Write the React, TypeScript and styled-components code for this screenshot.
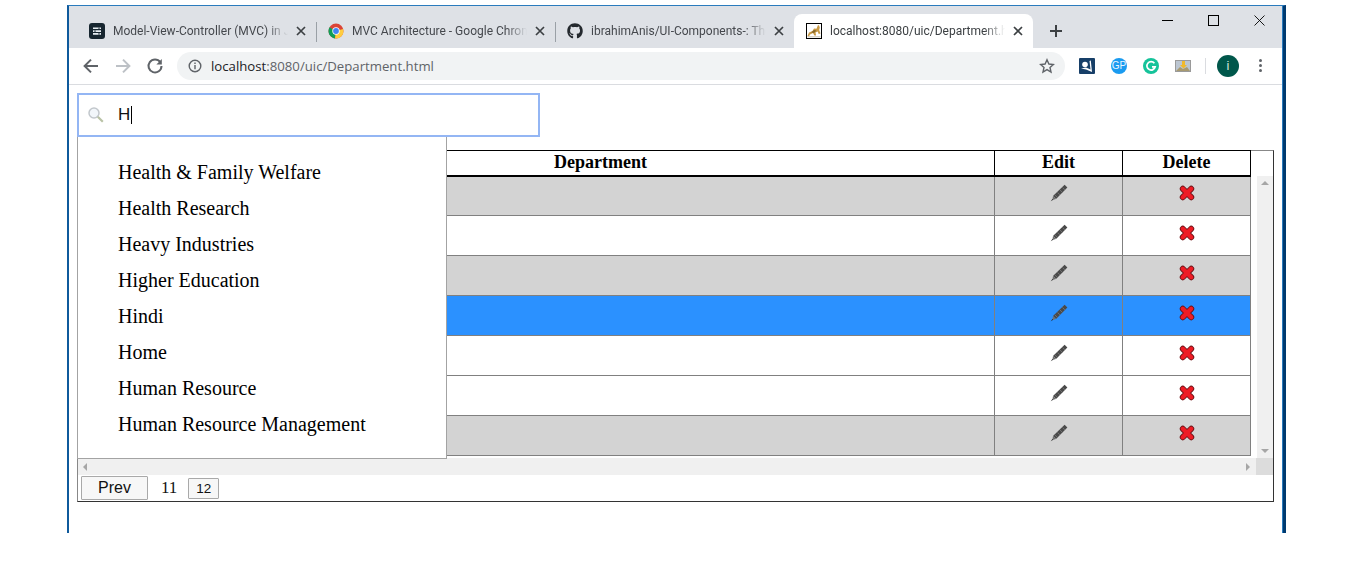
import styled, { createGlobalStyle } from 'styled-components';
import { FaGithub } from 'react-icons/fa';

const GlobalStyle = createGlobalStyle`
  html, body {
    margin: 0;
    padding: 0;
    background: #fff;
  }
  * {
    box-sizing: border-box;
  }
`;

const Page = styled.div`
  width: 1360px;
  height: 570px;
  padding: 5px 0 0 67px;
  overflow: hidden;
`;

const Window = styled.div`
  width: 1219px;
  height: 528px;
  position: relative;
  border-top: 1px solid #2a7bbd;
  border-left: 2px solid #0f5a9c;
  border-right: 3px solid #003a70;
  display: flex;
  flex-direction: column;
  background: #fff;

  &::after {
    content: '';
    position: absolute;
    top: 0;
    bottom: 0;
    right: 0;
    width: 1px;
    background: #2a7bbd;
  }
`;

const TitleBar = styled.div`
  height: 42px;
  flex: none;
  background: #dee1e6;
  display: flex;
  padding: 8px 0 0 8px;
  position: relative;
`;

const Tab = styled.div<{ $active?: boolean }>`
  width: 239px;
  height: 34px;
  flex: none;
  display: flex;
  align-items: center;
  padding-left: 12px;
  position: relative;
  background: ${(p) => (p.$active ? '#fff' : 'transparent')};
  border-radius: 8px 8px 0 0;
  font-family: Roboto, 'Open Sans', sans-serif;
  font-size: 12px;
  color: ${(p) => (p.$active ? '#3c4043' : '#45484d')};
`;

const TabSeparator = styled.span`
  position: absolute;
  right: -1px;
  top: 8px;
  width: 1px;
  height: 20px;
  background: #9aa0a6;
`;

const Favicon = styled.span`
  width: 16px;
  height: 16px;
  flex: none;
  display: flex;
  margin-right: 8px;
`;

const TabTitle = styled.span`
  width: 175px;
  flex: none;
  overflow: hidden;
  white-space: nowrap;
  -webkit-mask-image: linear-gradient(to right, #000 88%, transparent 100%);
  mask-image: linear-gradient(to right, #000 88%, transparent 100%);
`;

const TabClose = styled.span`
  display: flex;
  margin-left: 8px;
`;

const NewTab = styled.span`
  display: flex;
  align-items: center;
  margin-left: 16px;
  height: 34px;
`;

const WindowControls = styled.div`
  display: flex;
  position: absolute;
  right: 18px;
  top: 9px;
  gap: 35px;
`;

const Toolbar = styled.div`
  height: 37px;
  flex: none;
  border-bottom: 1px solid #dadce0;
  display: flex;
  align-items: center;
  padding: 0 15px 1px 13px;
`;

const NavButton = styled.span`
  width: 18px;
  height: 18px;
  display: flex;
  margin-right: 14px;
`;

const AddressBar = styled.div`
  width: 888px;
  height: 28px;
  margin-left: -1px;
  border-radius: 14px;
  background: #f1f3f4;
  display: flex;
  align-items: center;
  padding: 0 10px 0 11px;
  font-family: 'Open Sans', 'Noto Sans', sans-serif;
  font-size: 13.2px;
  color: #5f6368;
`;

const AddressHost = styled.span`
  color: #202124;
`;

const AddressText = styled.span`
  margin-left: 9px;
  flex: 1;
`;

const Extensions = styled.div`
  display: flex;
  align-items: center;
  margin-left: 14px;
  gap: 16px;
`;

const ExtSlot = styled.span`
  width: 16px;
  height: 16px;
  display: flex;
`;

const GpBadge = styled.span`
  width: 16px;
  height: 16px;
  border-radius: 50%;
  background: #1a9bf0;
  color: #e8f5ff;
  font-family: 'Liberation Sans', sans-serif;
  font-size: 10px;
  line-height: 16px;
  text-align: center;
`;

const ToolbarDivider = styled.span`
  width: 1px;
  height: 16px;
  background: #dadce0;
  margin-left: 14px;
`;

const Avatar = styled.span`
  width: 22px;
  height: 22px;
  margin-left: 11px;
  border-radius: 50%;
  background: #00574b;
  color: #cfe3de;
  font-family: 'Liberation Sans', sans-serif;
  font-size: 13px;
  line-height: 22px;
  text-align: center;
`;

const MenuDots = styled.span`
  display: flex;
  flex-direction: column;
  gap: 2px;
  margin-left: 20px;

  i {
    width: 3px;
    height: 3px;
    border-radius: 50%;
    background: #5f6368;
  }
`;

const Content = styled.div`
  flex: 1;
  position: relative;
  padding: 8px 0 0 8px;
`;

const SearchBox = styled.div`
  width: 463px;
  height: 44px;
  border: 2px solid #94b6f4;
  display: flex;
  align-items: center;
  padding: 0 0 0 8px;
  background: #fff;
  font-family: 'Liberation Sans', sans-serif;
  font-size: 17px;
  color: #111;
`;

const SearchIcon = styled.span`
  width: 18px;
  height: 18px;
  display: flex;
  margin-right: 13px;
`;

const Caret = styled.span`
  width: 1px;
  height: 18px;
  background: #000;
  margin-left: 1px;
`;

const Suggestions = styled.ul`
  position: absolute;
  left: 8px;
  top: 52px;
  width: 370px;
  height: 322px;
  margin: 0;
  padding: 17px 0 15px 40px;
  list-style: none;
  background: #fff;
  border: 1px solid #a3a3a3;
  border-top: none;
  z-index: 2;
`;

const Suggestion = styled.li`
  height: 36px;
  line-height: 36px;
  font-family: 'Liberation Serif', serif;
  font-size: 20px;
  color: #000;
  white-space: nowrap;
`;

const Panel = styled.div`
  width: 1197px;
  height: 352px;
  margin-top: 13px;
  border: 1px solid #333;
  border-top-color: #888;
  border-left-color: #888;
  display: flex;
  flex-direction: column;
`;

const ScrollRow = styled.div`
  height: 307px;
  display: flex;
`;

const Table = styled.table`
  width: 1173px;
  height: 305px;
  margin: -1px 0 0 -1px;
  flex: none;
  table-layout: fixed;
  border-collapse: collapse;
  font-family: 'Liberation Serif', serif;
`;

const HeadCell = styled.th`
  height: 25px;
  padding: 0;
  font-size: 18px;
  font-weight: 700;
  color: #000;
  border: 1px solid #000;
  border-bottom-width: 2px;
  text-align: center;
`;

const Row = styled.tr<{ $tone: 'gray' | 'white' | 'blue' }>`
  height: 40px;
  background: ${(p) =>
    p.$tone === 'gray' ? '#d3d3d3' : p.$tone === 'blue' ? '#2b91ff' : '#fff'};
`;

const Cell = styled.td`
  padding: 0 0 5px;
  border: 1px solid #808080;
  text-align: center;
  line-height: 0;
`;

const VScrollbar = styled.div`
  width: 17px;
  height: 282px;
  margin: 25px 0 0 6px;
  background: #f0f0f0;
  display: flex;
  flex-direction: column;
  justify-content: space-between;
  align-items: center;
  padding: 5px 0;
`;

const HScrollbar = styled.div`
  height: 17px;
  flex: none;
  display: flex;
  background: #f0f0f0;
`;

const HTrack = styled.div`
  flex: 1;
  display: flex;
  align-items: center;
  justify-content: space-between;
  padding: 0 6px 0 5px;
`;

const ScrollCorner = styled.div`
  width: 17px;
  background: #dcdcdc;
`;

const Arrow = styled.span<{ $dir: 'up' | 'down' | 'left' | 'right' }>`
  width: 0;
  height: 0;
  border: 4px solid transparent;
  ${(p) => (p.$dir === 'up' ? 'border-top-width: 0; border-bottom: 4px solid #a6a6a6;' : '')}
  ${(p) => (p.$dir === 'down' ? 'border-bottom-width: 0; border-top: 4px solid #a6a6a6;' : '')}
  ${(p) => (p.$dir === 'left' ? 'border-left-width: 0; border-right: 4px solid #a6a6a6;' : '')}
  ${(p) => (p.$dir === 'right' ? 'border-right-width: 0; border-left: 4px solid #a6a6a6;' : '')}
`;

const Pager = styled.div`
  flex: 1;
  display: flex;
  align-items: center;
  padding-left: 3px;
`;

const PageButton = styled.button<{ $wide?: boolean }>`
  width: ${(p) => (p.$wide ? '67px' : '31px')};
  height: ${(p) => (p.$wide ? '24px' : '21px')};
  padding: 0;
  border: 1px solid #a9a9a9;
  border-radius: 1px;
  background: #f7f7f7;
  color: #111;
  font-family: 'Liberation Sans', sans-serif;
  font-size: ${(p) => (p.$wide ? '16px' : '13.5px')};
`;

const CurrentPage = styled.span`
  margin: 0 11px 0 13px;
  font-family: 'Liberation Serif', serif;
  font-size: 17px;
  color: #111;
`;

const PencilIcon = () => (
  <svg width="18" height="18" viewBox="0 0 18 18">
    <path d="M14.600 .8l2.800 2.800L6 15 3 12z" fill="#4a4a4a" />
    <path d="M5 11l2.400 2.400M7.500 8.500l2.400 2.400M10 6l2.400 2.400M12.500 3.500l2.400 2.400" stroke="#808080" strokeWidth="0.7" />
    <path d="M3 12l3 3-3.600 1z" fill="#6e6e6e" />
    <path d="M.8 17.200l1.600-2.200.8.8z" fill="#222" />
  </svg>
);

const CrossIcon = () => (
  <svg width="16" height="16" viewBox="0 0 16 16">
    <path d="M3.800 3.800l8.400 8.400M12.200 3.800l-8.400 8.400" stroke="#6b1216" strokeWidth="6" strokeLinecap="round" />
    <path d="M3.800 3.800l8.400 8.400M12.200 3.800l-8.400 8.400" stroke="#ee1c25" strokeWidth="4.400" strokeLinecap="round" />
  </svg>
);

const CloseGlyph = () => (
  <svg width="10" height="10" viewBox="0 0 10 10">
    <path d="M1 1l8 8M9 1L1 9" stroke="#3c4043" strokeWidth="1.7" />
  </svg>
);

const ChromeLogo = () => (
  <svg width="16" height="16" viewBox="0 0 16 16">
    <circle cx="8" cy="8" r="7.500" fill="#db4437" />
    <path d="M8 8L1.500 4.200A7.500 7.500 0 0 0 7 15.400z" fill="#0f9d58" />
    <path d="M8 8l7.200-2A7.500 7.500 0 0 1 7 15.400z" fill="#ffcd40" />
    <circle cx="8" cy="8" r="3.700" fill="#fff" />
    <circle cx="8" cy="8" r="2.900" fill="#4285f4" />
  </svg>
);

const DocsLogo = () => (
  <svg width="16" height="16" viewBox="0 0 16 16">
    <rect width="16" height="16" rx="3" fill="#172630" />
    <path d="M4 4.500h8v1.600H4zM4 7.300h8v1.600H4zM4 10.100h8v1.600H4z" fill="#e8eef2" />
    <path d="M9.500 4.500h1v1.600h-1zM5.500 7.300h1v1.600h-1zM9.500 10.100h1v1.600h-1z" fill="#172630" />
  </svg>
);

const TomcatLogo = () => (
  <svg width="16" height="16" viewBox="0 0 16 16">
    <rect x="0.500" y="0.500" width="15" height="15" fill="#fff" stroke="#000" />
    <path d="M1.500 13l1.500-3.500 3.500-1.500 1.500-2.500 2.500.3L12 2l1 .5.800 2-.6 2.500 1.300 3.500-1.800.5-1-2.500-2.200 1 .6 3H8.400L7 10 4 11.500 3 13.500z" fill="#c99a45" />
    <path d="M5 9.500l3-2.500 2.500.5-2.500 2.500z" fill="#8a6a2c" />
    <path d="M1.500 13.800h13" stroke="#c5bfb0" />
  </svg>
);

const ArrowIcon = ({ color, flip }: { color: string; flip?: boolean }) => (
  <svg width="18" height="18" viewBox="0 0 18 18" style={flip ? { transform: 'scaleX(-1)' } : undefined}>
    <path d="M16 9H3M9 2.600L2.600 9 9 15.400" fill="none" stroke={color} strokeWidth="2" />
  </svg>
);

const departments = [
  'Health & Family Welfare',
  'Health Research',
  'Heavy Industries',
  'Higher Education',
  'Hindi',
  'Home',
  'Human Resource',
  'Human Resource Management',
];

const rows: Array<'gray' | 'white' | 'blue'> = ['gray', 'white', 'gray', 'blue', 'white', 'white', 'gray'];

export default function App() {
  return (
    <>
      <GlobalStyle />
      <Page>
        <Window>
          <TitleBar>
            <Tab>
              <Favicon>
                <DocsLogo />
              </Favicon>
              <TabTitle>Model-View-Controller (MVC) in Java</TabTitle>
              <TabClose>
                <CloseGlyph />
              </TabClose>
              <TabSeparator />
            </Tab>
            <Tab>
              <Favicon>
                <ChromeLogo />
              </Favicon>
              <TabTitle>MVC Architecture - Google Chrome</TabTitle>
              <TabClose>
                <CloseGlyph />
              </TabClose>
              <TabSeparator />
            </Tab>
            <Tab>
              <Favicon>
                <FaGithub size={16} color="#24292e" />
              </Favicon>
              <TabTitle>ibrahimAnis/UI-Components-: The</TabTitle>
              <TabClose>
                <CloseGlyph />
              </TabClose>
            </Tab>
            <Tab $active>
              <Favicon>
                <TomcatLogo />
              </Favicon>
              <TabTitle>localhost:8080/uic/Department.html</TabTitle>
              <TabClose>
                <CloseGlyph />
              </TabClose>
            </Tab>
            <NewTab>
              <svg width="14" height="14" viewBox="0 0 14 14">
                <path d="M7 1v12M1 7h12" stroke="#3c4043" strokeWidth="2" />
              </svg>
            </NewTab>
            <WindowControls>
              <svg width="11" height="11" viewBox="0 0 11 11">
                <path d="M0 5.500h11" stroke="#000" />
              </svg>
              <svg width="11" height="11" viewBox="0 0 11 11">
                <rect x="0.500" y="0.500" width="10" height="10" fill="none" stroke="#000" />
              </svg>
              <svg width="11" height="11" viewBox="0 0 11 11">
                <path d="M.5.5l10 10M10.500.5l-10 10" stroke="#000" strokeWidth="0.9" />
              </svg>
            </WindowControls>
          </TitleBar>
          <Toolbar>
            <NavButton>
              <ArrowIcon color="#5f6368" />
            </NavButton>
            <NavButton>
              <ArrowIcon color="#bdc1c6" flip />
            </NavButton>
            <NavButton>
              <svg width="18" height="18" viewBox="0 0 18 18">
                <path d="M14.300 5.200A6.500 6.500 0 1 0 15.500 9" fill="none" stroke="#5f6368" strokeWidth="2" />
                <path d="M15.800 2v5.400h-5.400z" fill="#5f6368" />
              </svg>
            </NavButton>
            <AddressBar>
              <svg width="14" height="14" viewBox="0 0 14 14">
                <circle cx="7" cy="7" r="5.800" fill="none" stroke="#5f6368" strokeWidth="1.400" />
                <path d="M7 6v4.200M7 3.600v1.400" stroke="#5f6368" strokeWidth="1.400" />
              </svg>
              <AddressText>
                <AddressHost>localhost</AddressHost>:8080/uic/Department.html
              </AddressText>
              <svg width="16" height="16" viewBox="0 0 16 16">
                <path
                  d="M8 1.800l1.900 4.200 4.500.5-3.400 3 1 4.500L8 11.600 4 14l1-4.500-3.400-3 4.500-.5z"
                  fill="none"
                  stroke="#5f6368"
                  strokeWidth="1.400"
                />
              </svg>
            </AddressBar>
            <Extensions>
              <ExtSlot>
                <svg width="16" height="16" viewBox="0 0 16 16">
                  <rect width="16" height="16" rx="1" fill="#173f68" />
                  <path d="M2 10.500l5 1 6 2.500-1.200-11.500-1.300.5 1 8.500-4.500-2z" fill="#fff" />
                  <circle cx="6" cy="6.500" r="2.800" fill="#fff" />
                </svg>
              </ExtSlot>
              <GpBadge>GP</GpBadge>
              <ExtSlot>
                <svg width="16" height="16" viewBox="0 0 16 16">
                  <circle cx="8" cy="8" r="8" fill="#15c39a" />
                  <path d="M11.400 5.200A4.200 4.200 0 1 0 12.200 8.800H9" fill="none" stroke="#fff" strokeWidth="1.700" />
                </svg>
              </ExtSlot>
              <ExtSlot>
                <svg width="16" height="16" viewBox="0 0 16 16">
                  <rect y="2" width="16" height="12" fill="#bcc6d2" />
                  <rect x="0.500" y="2.500" width="15" height="11" fill="none" stroke="#9a9a9a" />
                  <path d="M1 13l4-4 3 2 4-2 3 4z" fill="#a89a70" />
                  <path d="M7 3h3v4h2l-3.500 3.500L5 7h2z" fill="#f0b92c" />
                </svg>
              </ExtSlot>
            </Extensions>
            <ToolbarDivider />
            <Avatar>i</Avatar>
            <MenuDots>
              <i />
              <i />
              <i />
            </MenuDots>
          </Toolbar>
          <Content>
            <SearchBox>
              <SearchIcon>
                <svg width="18" height="18" viewBox="0 0 18 18">
                  <circle cx="7" cy="7" r="5" fill="#f2f6fa" stroke="#c2c7cc" strokeWidth="1.500" />
                  <path d="M10.800 10.800l5 5" stroke="#b9c2a6" strokeWidth="2.200" />
                </svg>
              </SearchIcon>
              H
              <Caret />
            </SearchBox>
            <Suggestions>
              {departments.map((name) => (
                <Suggestion key={name}>{name}</Suggestion>
              ))}
            </Suggestions>
            <Panel>
              <ScrollRow>
                <Table>
                  <colgroup>
                    <col width="129" />
                    <col width="788" />
                    <col width="128" />
                    <col width="128" />
                  </colgroup>
                  <thead>
                    <tr>
                      <HeadCell />
                      <HeadCell>Department</HeadCell>
                      <HeadCell>Edit</HeadCell>
                      <HeadCell>Delete</HeadCell>
                    </tr>
                  </thead>
                  <tbody>
                    {rows.map((tone, i) => (
                      <Row key={i} $tone={tone}>
                        <Cell />
                        <Cell />
                        <Cell>
                          <PencilIcon />
                        </Cell>
                        <Cell>
                          <CrossIcon />
                        </Cell>
                      </Row>
                    ))}
                  </tbody>
                </Table>
                <VScrollbar>
                  <Arrow $dir="up" />
                  <Arrow $dir="down" />
                </VScrollbar>
              </ScrollRow>
              <HScrollbar>
                <HTrack>
                  <Arrow $dir="left" />
                  <Arrow $dir="right" />
                </HTrack>
                <ScrollCorner />
              </HScrollbar>
              <Pager>
                <PageButton $wide>Prev</PageButton>
                <CurrentPage>11</CurrentPage>
                <PageButton>12</PageButton>
              </Pager>
            </Panel>
          </Content>
        </Window>
      </Page>
    </>
  );
}
